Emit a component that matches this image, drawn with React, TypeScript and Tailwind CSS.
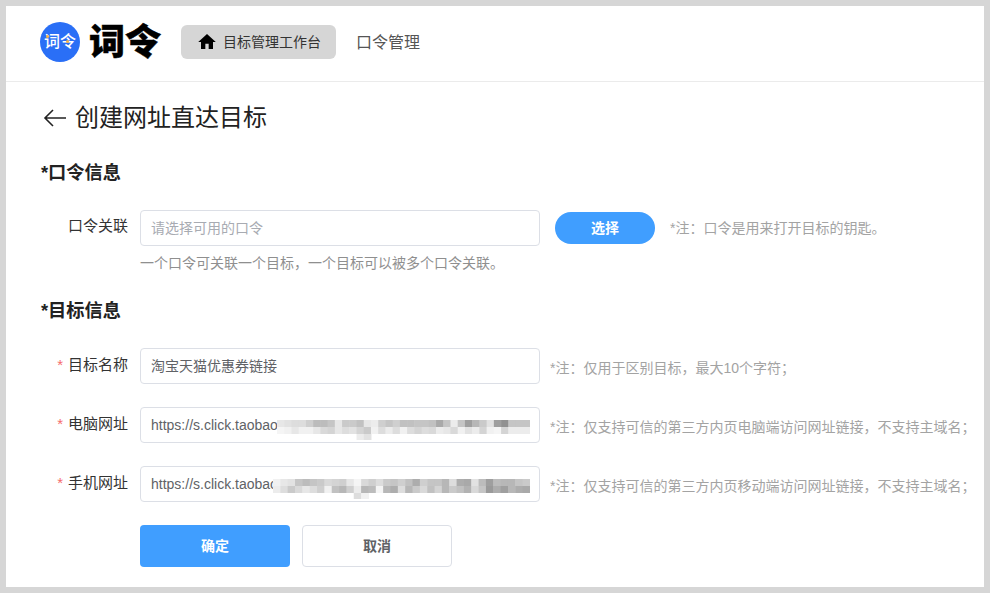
import React from "react";

const font = "font-['Liberation_Sans','Noto_Sans_CJK_SC',sans-serif]";

const mosaicA = [
  [10,12,14,14,20,28,28,24,10,22,22,26,10,8,20,24,20,26,26,24,24,26,36,24,8,24,40,30,22,12,40,46,24,24,24],
  [4,6,10,6,6,10,16,18,10,14,12,18,22,6,14,8,14,6,14,18,14,16,8,10,16,6,12,8,18,6,4,18,8,8,8],
  [0,0,0,0,0,0,0,0,0,0,0,8,12,0,0,0,0,0,0,0,0,0,0,0,0,0,0,0,0,0,0,0,0,0,0],
];
const mosaicB = [
  [6,10,12,24,28,24,22,16,18,20,10,4,16,20,14,22,24,20,26,34,20,24,24,30,14,34,36,12,28,40,28,30,30,24,22],
  [8,14,22,16,10,14,20,6,26,30,20,8,30,28,4,30,34,14,30,22,16,26,18,30,22,26,32,16,24,42,34,40,30,34,36],
  [0,0,0,0,0,0,0,0,0,0,0,14,6,0,0,0,0,0,0,0,0,0,0,0,0,0,0,0,0,0,0,0,0,0,0],
];

function Mosaic({ data, width }: { data: number[][]; width: number }) {
  const cols = data[0].length;
  const cw = width / cols;
  return (
    <svg width={width} height={20} className="absolute right-[9px] top-[12px]" aria-hidden="true">
      {data.map((row, r) =>
        row.map((v, c) =>
          v > 0 ? (
            <rect
              key={`${r}-${c}`}
              x={c * cw}
              y={r * 7}
              width={cw + 0.5}
              height={7}
              fill={`rgb(${255 - v * 2.4},${255 - v * 2.4},${255 - v * 2.4})`}
            />
          ) : null
        )
      )}
    </svg>
  );
}

function Field({
  label,
  required,
  value,
  note,
  children,
}: {
  label: string;
  required?: boolean;
  value?: string;
  note?: string;
  children?: React.ReactNode;
}) {
  return (
    <div className="flex items-center h-9">
      <label className="w-[117px] text-right text-[15px] leading-[32px] -mt-[3px] text-[#333] whitespace-nowrap">
        {required && <span className="text-[#f56c6c] mr-[5px]">*</span>}
        {label}
      </label>
      <div className="relative ml-[12px] w-[400px] h-9 border border-[#dcdfe6] rounded-[4px] px-[10px] flex items-center text-sm text-[#606266] overflow-hidden bg-white whitespace-nowrap">
        {value}
        {children}
      </div>
      {note && <span className="ml-[10px] mt-[3px] text-sm text-[#a3a3a3] whitespace-nowrap">{note}</span>}
    </div>
  );
}

export default function App() {
  return (
    <div className={`${font} w-[990px] h-[593px] bg-[#d6d6d6] p-[6px] overflow-hidden`}>
      <div className="h-full bg-white">
        <header className="h-[76px] border-b border-[#ebebeb] flex items-center pl-[34px] pb-[4px]">
          <div className="relative w-10 h-10 rounded-full bg-[#2a6ff6] flex items-center justify-center text-white text-[16px] font-medium leading-none">
            词令
            <span className="absolute left-[6px] top-[13px] w-[3px] h-[3px] rounded-full bg-[#f5b342]" />
            <span className="absolute left-[26px] top-[18px] w-[3px] h-[3px] rounded-full bg-[#f5b342]" />
          </div>
          <div className="ml-[9px] mt-[3px] w-[72px] text-[36px] leading-none font-black text-black whitespace-nowrap [-webkit-text-stroke:0.5px_black]">
            词令
          </div>
          <nav className="ml-[20px] flex items-center">
            <div className="w-[155px] h-[34px] rounded-[6px] bg-[#d6d6d6] flex items-center pl-[16px]">
              <svg width="20" height="20" viewBox="0 0 24 24" fill="black" aria-hidden="true">
                <path d="M10 20.5v-6.5h4v6.5h5.2v-8.5h3.3L12 2.5 1.5 12h3.3v8.5z" />
              </svg>
              <span className="ml-[6px] mt-[1px] text-sm text-[#333]">目标管理工作台</span>
            </div>
            <div className="ml-[20px] mt-[2px] text-base text-[#555]">口令管理</div>
          </nav>
        </header>

        <main className="pl-[34px]">
          <div className="flex items-center h-9 mt-[18px]">
            <svg width="24" height="20" viewBox="0 0 24 20" fill="none" stroke="#222" strokeWidth="1.6" className="ml-[3px]" aria-hidden="true">
              <path d="M23 10H2M10 2l-8 8 8 8" />
            </svg>
            <h1 className="ml-[8px] text-2xl font-normal text-[#222]">创建网址直达目标</h1>
          </div>

          <h2 className="mt-[23px] ml-[1px] text-[18.25px] leading-[28px] font-bold text-[#222]">*口令信息</h2>

          <div className="mt-[23px] flex items-center h-9">
            <label className="w-[88px] text-right text-[15px] -mt-[4px] text-[#333] whitespace-nowrap">
              口令关联
            </label>
            <div className="ml-[12px] w-[400px] h-9 border border-[#dcdfe6] rounded-[4px] px-[10px] flex items-center text-sm text-[#a8abb2]">
              请选择可用的口令
            </div>
            <button className="ml-[15px] w-[100px] h-[32px] rounded-full bg-[#409eff] text-white text-sm font-bold">
              选择
            </button>
            <span className="ml-[15px] -mt-[1px] text-sm text-[#a3a3a3] whitespace-nowrap">*注：口令是用来打开目标的钥匙。</span>
          </div>
          <p className="ml-[100px] mt-[7px] text-sm leading-[20px] text-[#8f8f8f]">一个口令可关联一个目标，一个目标可以被多个口令关联。</p>

          <h2 className="mt-[24px] ml-[1px] text-[18.25px] leading-[28px] font-bold text-[#222]">*目标信息</h2>

          <div className="mt-[23px] -ml-[29px]">
            <Field label="目标名称" required value="淘宝天猫优惠券链接" note="*注：仅用于区别目标，最大10个字符；" />
            <div className="mt-[23px]">
              <Field label="电脑网址" required value="https://s.click.taobao" note="*注：仅支持可信的第三方内页电脑端访问网址链接，不支持主域名；">
                <Mosaic data={mosaicA} width={253} />
              </Field>
            </div>
            <div className="mt-[23px]">
              <Field label="手机网址" required value="https://s.click.taobao" note="*注：仅支持可信的第三方内页移动端访问网址链接，不支持主域名；">
                <Mosaic data={mosaicB} width={257} />
              </Field>
            </div>
          </div>

          <div className="mt-[23px] ml-[100px] flex gap-3">
            <button className="w-[150px] h-[42px] rounded-[4px] bg-[#409eff] text-white text-sm font-bold">确定</button>
            <button className="w-[150px] h-[42px] rounded-[4px] border border-[#dcdfe6] bg-white text-[#606266] text-sm font-bold">取消</button>
          </div>
        </main>
      </div>
    </div>
  );
}
